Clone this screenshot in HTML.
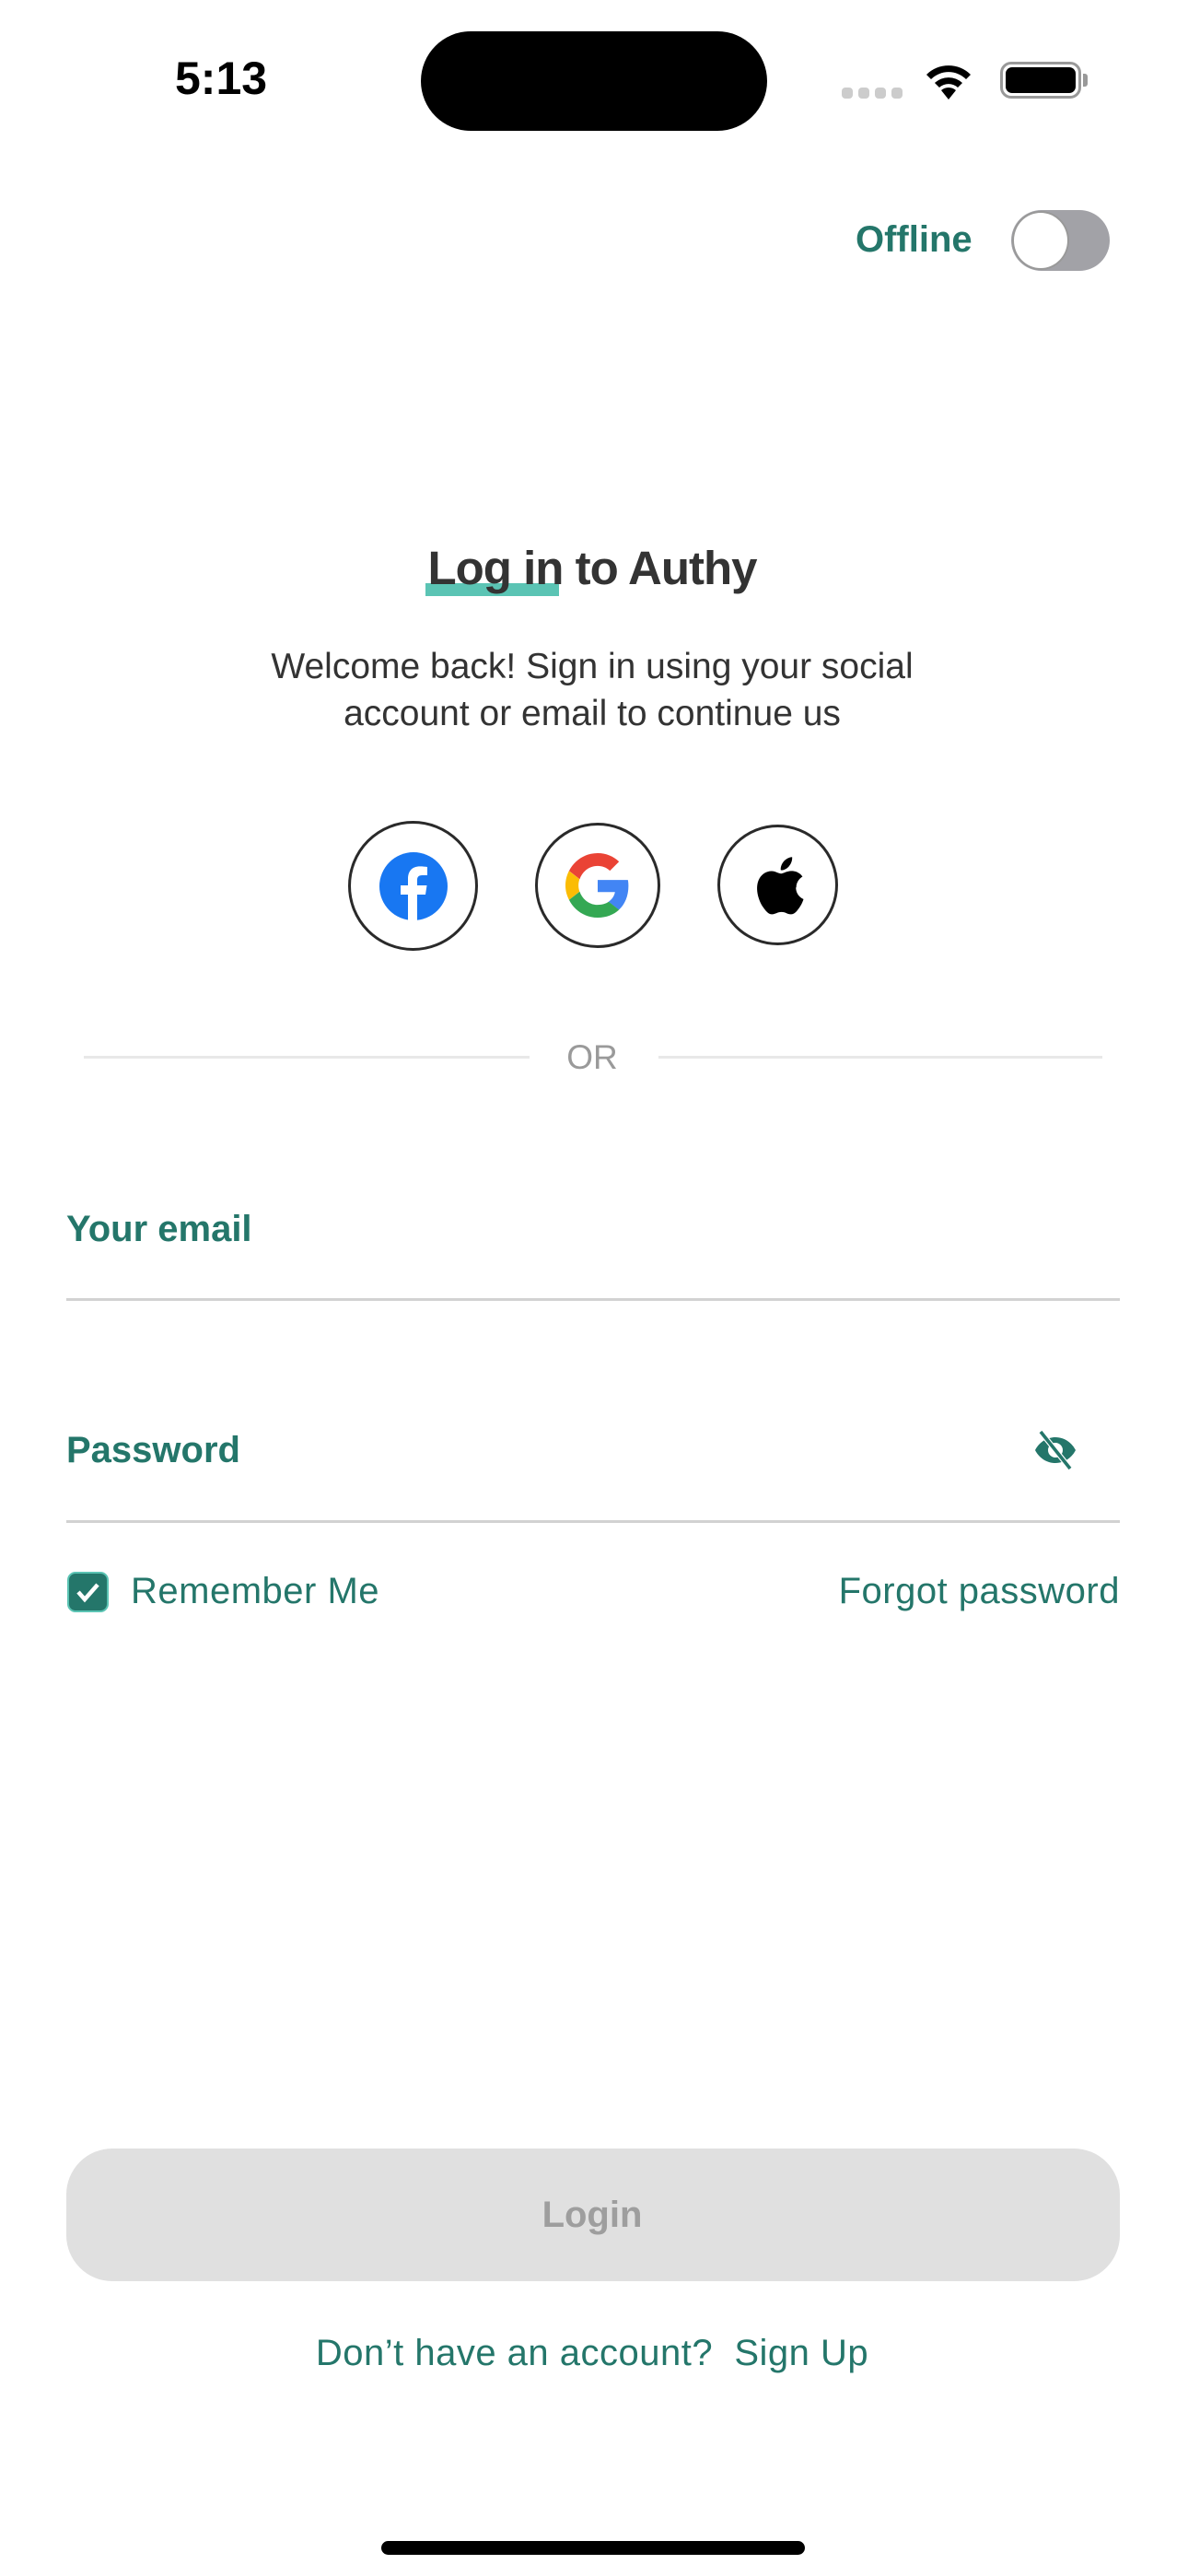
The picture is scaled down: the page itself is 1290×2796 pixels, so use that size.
<!DOCTYPE html>
<html><head><meta charset="utf-8"><style>
*{margin:0;padding:0;box-sizing:border-box}
body{width:1290px;height:2796px;background:#fff;position:relative;overflow:hidden;font-family:"Liberation Sans",sans-serif}
.a{position:absolute}
.g{color:#24766a}
.c{text-align:center;left:0;width:1286px}
.circle{position:absolute;border:3.5px solid #2a2a2a;border-radius:50%;display:flex;align-items:center;justify-content:center}
</style></head><body>
<div class="a" style="left:190px;top:56px;font-size:50px;font-weight:bold;color:#000">5:13</div>
<div class="a" style="left:457px;top:34px;width:376px;height:108px;border-radius:55px;background:#000"></div>
<div class="a" style="left:914px;top:95px;width:66px;height:12px">
<div class="a" style="left:0;width:12px;height:12px;border-radius:4px;background:#ccc"></div>
<div class="a" style="left:18px;width:12px;height:12px;border-radius:4px;background:#ccc"></div>
<div class="a" style="left:36px;width:12px;height:12px;border-radius:4px;background:#ccc"></div>
<div class="a" style="left:54px;width:12px;height:12px;border-radius:4px;background:#ccc"></div>
</div>
<svg class="a" style="left:1000px;top:64px" width="60" height="44" viewBox="0 0 60 44"><path d="M30 44 L22 34 A12 12 0 0 1 38 34 Z" fill="#000"/><path d="M15 26 A22 22 0 0 1 45 26 L40 31 A15 15 0 0 0 20 31Z" fill="#000"/><path d="M6 17 A34 34 0 0 1 54 17 L49 22 A27 27 0 0 0 11 22Z" fill="#000"/></svg>
<div class="a" style="left:1086px;top:67px;width:88px;height:40px;border:3px solid #999;border-radius:12px"></div>
<div class="a" style="left:1092px;top:73px;width:76px;height:28px;background:#000;border-radius:7px"></div>
<div class="a" style="left:1176px;top:80px;width:5px;height:14px;background:#999;border-radius:0 3px 3px 0"></div>

<div class="a g" style="left:929px;top:238px;font-size:40px;font-weight:bold">Offline</div>
<div class="a" style="left:1098px;top:228px;width:107px;height:66px;border-radius:33px;background:#a2a2a7"></div>
<div class="a" style="left:1099px;top:229px;width:62px;height:64px;border-radius:50%;background:#fff;border:2px solid #999"></div>

<div class="a" style="left:462px;top:633px;width:145px;height:14px;background:#5bc4b4"></div>
<div class="a c" style="top:587px;font-size:51px;font-weight:bold;color:#333;letter-spacing:-1px">Log in to Authy</div>
<div class="a c" style="top:698px;font-size:39px;color:#333;line-height:51px">Welcome back! Sign in using your social<br>account or email to continue us</div>

<div class="circle" style="left:378px;top:891px;width:141px;height:141px">
<svg width="74" height="74" viewBox="0 0 74 74"><circle cx="37" cy="37" r="37" fill="#1877f2"/><path d="M41 74V46h9l1.5-10H41v-6c0-3 1.5-5 5.5-5H52v-9c-2-.3-5-.6-8-.6-8 0-13 4.6-13 13.6V36h-8v10h8v28z" fill="#fff"/></svg></div>
<div class="circle" style="left:581px;top:893px;width:136px;height:136px">
<svg width="70" height="70" viewBox="0 0 48 48"><path fill="#EA4335" d="M24 9.5c3.5 0 6.6 1.2 9.1 3.6l6.8-6.8C35.8 2.4 30.3 0 24 0 14.6 0 6.6 5.4 2.7 13.2l7.9 6.2C12.5 13.6 17.8 9.5 24 9.5z"/><path fill="#4285F4" d="M46.9 24.5c0-1.6-.1-3.1-.4-4.5H24v9h12.9c-.6 3-2.3 5.5-4.8 7.2l7.7 6c4.5-4.2 7.1-10.4 7.1-17.7z"/><path fill="#FBBC05" d="M10.5 28.6c-.5-1.4-.8-3-.8-4.6s.3-3.2.8-4.6l-7.9-6.2C1 16.5 0 20.1 0 24s1 7.5 2.7 10.8z"/><path fill="#34A853" d="M24 48c6.5 0 11.9-2.1 15.9-5.8l-7.7-6c-2.200 1.5-5 2.3-8.2 2.3-6.2 0-11.5-4.2-13.4-9.9l-7.9 6.2C6.6 42.6 14.6 48 24 48z"/></svg></div>
<div class="circle" style="left:779px;top:895px;width:131px;height:131px">
<svg width="62" height="70" viewBox="0 0 384 448"><path fill="#000" d="M318 238c-.5-50 41-74 43-75-23-34-60-39-73-39-31-3-61 18-77 18s-40-18-66-17c-34 .5-65 20-83 50-35 61-9 151 25 200 17 24 37 51 63 50 25-1 35-16 65-16s39 16 65 16c27 0 44-25 61-49 19-28 27-55 27-57-1 0-52-20-53-81zM268 90c14-17 23-40 21-63-20 1-44 13-58 30-13 15-24 39-21 61 22 2 44-11 58-28z"/></svg></div>

<div class="a" style="left:91px;top:1146px;width:484px;height:3px;background:#e8e8e8"></div>
<div class="a" style="left:715px;top:1146px;width:482px;height:3px;background:#e8e8e8"></div>
<div class="a c" style="top:1127px;font-size:37px;color:#9a9a9a">OR</div>

<div class="a g" style="left:72px;top:1312px;font-size:40px;font-weight:bold">Your email</div>
<div class="a" style="left:72px;top:1409px;width:1144px;height:3px;background:#d2d2d2"></div>
<div class="a g" style="left:72px;top:1552px;font-size:40px;font-weight:bold">Password</div>
<svg class="a" style="left:1122px;top:1552px" width="48" height="44" viewBox="0 0 24 22"><path d="M12 4C6.5 4 2.7 7.6 1 11c1.7 3.4 5.5 7 11 7s9.3-3.6 11-7c-1.7-3.4-5.5-7-11-7zm0 11a4 4 0 1 1 0-8 4 4 0 0 1 0 8z" fill="#24766a"/><line x1="4" y1="1" x2="20" y2="21" stroke="#fff" stroke-width="3"/><line x1="4" y1="1" x2="20" y2="21" stroke="#24766a" stroke-width="1.8"/></svg>
<div class="a" style="left:72px;top:1650px;width:1144px;height:3px;background:#d2d2d2"></div>

<div class="a" style="left:73px;top:1706px;width:45px;height:44px;border-radius:9px;background:#24766a;border:2px solid #5bc4b4"></div>
<svg class="a" style="left:78px;top:1711px" width="35" height="34" viewBox="0 0 35 34"><path d="M7 17l7 8 14-16" stroke="#fff" stroke-width="4.5" fill="none"/></svg>
<div class="a g" style="left:142px;top:1705px;font-size:40px;letter-spacing:0.5px">Remember Me</div>
<div class="a g" style="right:74px;top:1705px;font-size:40px;letter-spacing:0.5px">Forgot password</div>

<div class="a" style="left:72px;top:2332px;width:1144px;height:144px;border-radius:50px;background:#e0e0e0"></div>
<div class="a c" style="top:2382px;font-size:40px;font-weight:bold;color:#9e9e9e">Login</div>
<div class="a c g" style="top:2532px;font-size:40px;letter-spacing:0.5px">Don’t have an account?&nbsp; Sign Up</div>
<div class="a" style="left:414px;top:2758px;width:460px;height:15px;border-radius:8px;background:#000"></div>
</body></html>
